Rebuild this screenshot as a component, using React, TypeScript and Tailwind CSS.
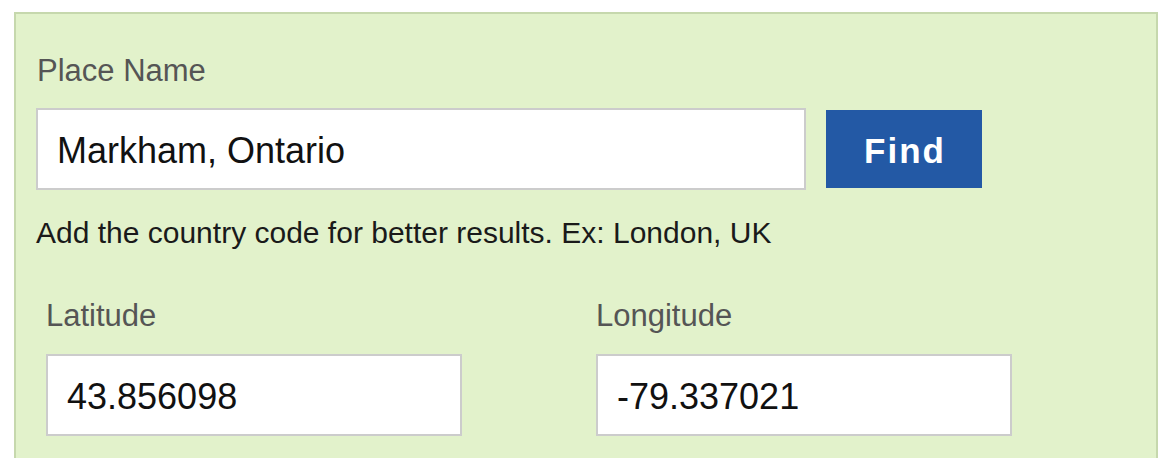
export default function App() {
  const font = { fontFamily: '"Liberation Sans", Arial, Helvetica, sans-serif' };
  return (
    <div className="w-[1170px] h-[458px] overflow-hidden bg-white pl-[14px] pr-[12px] pt-[12px]" style={font}>
      <div className="border-2 border-[#c6d8ad] bg-[#e2f2cb] pl-[20px] pt-[39px] pb-[60px]">
        <div className="pl-[1px] text-[31px] leading-[36px] text-[#555555]">Place Name</div>
        <div className="mt-[19px] flex items-center gap-[20px]">
          <div className="flex h-[82px] w-[770px] items-center border-2 border-[#cccccc] bg-white pl-[19px] pt-[4px] text-[36px] leading-[40px] text-[#111111]">
            Markham, Ontario
          </div>
          <button className="flex h-[78px] w-[156px] items-center justify-center bg-[#2359a5] pl-[2px] pt-[4px] text-[35px] font-bold leading-[40px] tracking-[2px] text-white">
            Find
          </button>
        </div>
        <div className="mt-[25px] text-[30px] leading-[36px] text-[#1a1a1a]">
          Add the country code for better results. Ex: London, UK
        </div>
        <div className="mt-[47px] grid grid-cols-[550px_550px] pl-[10px]">
          <div>
            <div className="text-[31px] leading-[36px] text-[#555555]">Latitude</div>
            <div className="mt-[20px] flex h-[82px] w-[416px] items-center border-2 border-[#cccccc] bg-white pl-[19px] pt-[4px] text-[36px] leading-[40px] text-[#111111]">
              43.856098
            </div>
          </div>
          <div>
            <div className="text-[31px] leading-[36px] text-[#555555]">Longitude</div>
            <div className="mt-[20px] flex h-[82px] w-[416px] items-center border-2 border-[#cccccc] bg-white pl-[19px] pt-[4px] text-[36px] leading-[40px] text-[#111111]">
              -79.337021
            </div>
          </div>
        </div>
      </div>
    </div>
  );
}
